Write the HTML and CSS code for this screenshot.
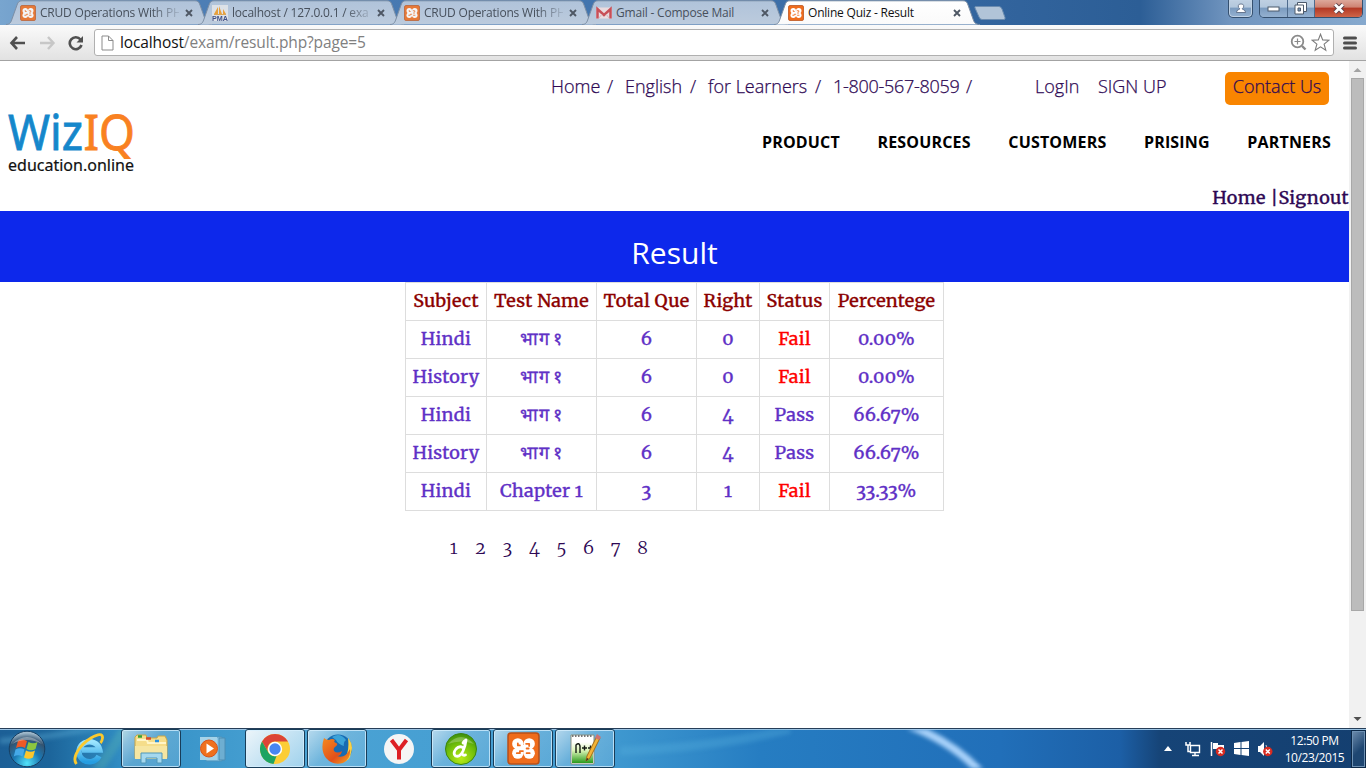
FILE: index.html
```html
<!DOCTYPE html>
<html lang="en">
<head>
<meta charset="utf-8">
<title>Online Quiz - Result</title>
<link rel="stylesheet" href="styles.css">
</head>
<body>
<svg width="0" height="0" class="defs">
  <defs>
    <linearGradient id="tabFill" x1="0" y1="0" x2="0" y2="1"><stop offset="0" stop-color="#b0c3da"/><stop offset="1" stop-color="#bccbdd"/></linearGradient>
    <linearGradient id="tabOn" x1="0" y1="0" x2="0" y2="1"><stop offset="0" stop-color="#fff"/><stop offset="1" stop-color="#fafafa"/></linearGradient>
    <radialGradient id="orb" cx=".5" cy=".9" r=".85"><stop offset="0" stop-color="#52e3fa"/><stop offset=".45" stop-color="#1a78b4"/><stop offset=".8" stop-color="#34536f"/><stop offset="1" stop-color="#9fb9cb"/></radialGradient>
    <linearGradient id="ieBlue" x1="0" y1="0" x2="0" y2="1"><stop offset="0" stop-color="#9de6ff"/><stop offset="1" stop-color="#259de1"/></linearGradient>
    <radialGradient id="dwGreen" cx=".5" cy=".8" r=".8"><stop offset="0" stop-color="#b8ec18"/><stop offset=".6" stop-color="#6fbd0b"/><stop offset="1" stop-color="#3d8f0c"/></radialGradient>
    <linearGradient id="nppFill" x1="0" y1="0" x2="0" y2="1"><stop offset="0" stop-color="#fff"/><stop offset=".4" stop-color="#dcf5b8"/><stop offset="1" stop-color="#2a9a1c"/></linearGradient>
    <linearGradient id="foxFill" x1="0" y1="0" x2="1" y2="1"><stop offset="0" stop-color="#f48a20"/><stop offset=".6" stop-color="#e2501a"/><stop offset="1" stop-color="#f6a623"/></linearGradient>
    <symbol id="tabShape" viewBox="0 0 206 25"><path d="M0 24.5C4 24.5 5 22 6 19L11 5C12 2 13 .8 16 .8H189C192 .8 193 2 194 5L199 19C200 22 201 24.5 206 24.5" stroke="#7d8fa5" stroke-width="1"/></symbol>
    <symbol id="xampp" viewBox="0 0 32 32"><rect x="1" y="1" width="30" height="30" rx="3" fill="#ef6c1c" stroke="#b8501a" stroke-width="1.5"/><g fill="#fff"><circle cx="10.500" cy="11.500" r="5.500"/><circle cx="21.500" cy="11.500" r="5.500"/><circle cx="10.500" cy="20.500" r="5.500"/><circle cx="21.500" cy="20.500" r="5.500"/><rect x="10" y="12.500" width="12" height="7.500"/></g><path d="M10.500 11V13H12.500M18.500 11.500H21.500V13.500M9.500 20.500H12.500V18.500H15.500M19 20.500H22M19 16H21" fill="none" stroke="#ef6c1c" stroke-width="1.700" stroke-linecap="round" stroke-linejoin="round"/></symbol>
    <symbol id="close" viewBox="0 0 8 8"><path d="M1 1L7 7M7 1L1 7" stroke="#4e5764" stroke-width="1.900"/></symbol>
  </defs>
</svg>

<div class="tabs">
  <div class="tab"><svg class="shape"><use href="#tabShape"/></svg><svg class="fav"><use href="#xampp"/></svg><span class="label fade">CRUD Operations With PH</span><svg class="x"><use href="#close"/></svg></div>
  <div class="tab"><svg class="shape"><use href="#tabShape"/></svg>
    <svg class="fav" viewBox="0 0 16 16"><rect width="16" height="16" fill="#e4e6ea"/><path d="M6 2V9H2ZM7 1L10 9H7ZM11 4L14 9H11Z" fill="#f29a1f"/><path d="M2 9.500H14" stroke="#e0a040"/><text x="0" y="15.500" font-size="6.500" font-weight="bold" font-family="Liberation Sans" fill="#2b3d78" textLength="16" lengthAdjust="spacingAndGlyphs">PMA</text></svg>
    <span class="label fade">localhost / 127.0.0.1 / exa</span><svg class="x"><use href="#close"/></svg></div>
  <div class="tab"><svg class="shape"><use href="#tabShape"/></svg><svg class="fav"><use href="#xampp"/></svg><span class="label fade">CRUD Operations With PH</span><svg class="x"><use href="#close"/></svg></div>
  <div class="tab"><svg class="shape"><use href="#tabShape"/></svg>
    <svg class="fav" viewBox="0 0 16 16"><rect y="2.500" width="16" height="11" rx="1" fill="#f3dfe0"/><path d="M1.500 13.500V4L8 10L14.500 4V13.500" fill="none" stroke="#cc3b41" stroke-width="2.500"/><path d="M3 13L6 9M13 13L10 9" stroke="#d7b4b8"/></svg>
    <span class="label">Gmail - Compose Mail</span><svg class="x"><use href="#close"/></svg></div>
  <div class="tab on"><svg class="shape"><use href="#tabShape"/></svg><svg class="fav"><use href="#xampp"/></svg><span class="label">Online Quiz - Result</span><svg class="x"><use href="#close"/></svg></div>
  <svg class="newtab" viewBox="0 0 32 16"><path d="M1.500 1.500H25Q27 1.500 28 4L31 12.500Q31.500 14.500 30 14.500H8Q6 14.500 5 12L1 3Q.5 1.500 1.500 1.500Z" fill="#b1c4d8" stroke="#6b8cb0"/></svg>
  <div class="caps">
    <div class="cap user"><svg width="12" height="12" viewBox="0 0 12 12"><path d="M6 1A2.300 2.300 0 0 1 7.500 5.300C7 6 7.500 6.500 8.500 6.700Q10.500 7.200 10.500 9.500H1.500Q1.500 7.200 3.500 6.700C4.500 6.500 5 6 4.500 5.300A2.300 2.300 0 0 1 6 1Z" fill="#fff" stroke="#50607a" stroke-width=".8"/></svg></div>
    <div class="capgroup">
      <div class="cap min"><svg width="14" height="6" viewBox="0 0 14 6"><rect x="1" y="1" width="11" height="4" fill="#fff" stroke="#4d5a6b"/></svg></div>
      <div class="cap max"><svg width="14" height="13" viewBox="0 0 14 13"><path d="M3.500 .5H12.500V9.500H3.500Z" fill="#fff" stroke="#4d5a6b"/><path d="M1 3H9.500V12H1Z" fill="#fff" stroke="#4d5a6b"/><path d="M4 6H6.500V9H4Z" fill="#7c98b8" stroke="#4d5a6b"/></svg></div>
      <div class="cap quit"><svg width="12" height="11" viewBox="0 0 12 11"><path d="M2 1.500L10 9.500M10 1.500L2 9.500" stroke="#5c4048" stroke-width="4.600"/><path d="M2 1.500L10 9.500M10 1.500L2 9.500" stroke="#fff" stroke-width="2.800"/></svg></div>
    </div>
  </div>
</div>

<div class="toolbar">
  <svg class="tool" width="18" height="16" viewBox="0 0 18 16"><path d="M2.500 8H16M8 2L2.500 8L8 14" fill="none" stroke="#505050" stroke-width="2.600"/></svg>
  <svg class="tool" width="18" height="16" viewBox="0 0 18 16"><path d="M2 8H15.500M10 2L15.500 8L10 14" fill="none" stroke="#c7c7c7" stroke-width="2.400"/></svg>
  <svg class="tool" width="18" height="16" viewBox="0 0 18 16"><path d="M13.500 4.500A6 6 0 1 0 14.500 10" fill="none" stroke="#505050" stroke-width="2.600"/><path d="M16 1V7.500H9.500Z" fill="#505050"/></svg>
  <div class="omni">
    <svg width="13" height="16" viewBox="0 0 13 16"><path d="M1 1H7.500L12 5.500V15H1ZM7.500 1V5.500H12" fill="#fff" stroke="#8b8b8b"/></svg>
    <span class="url"><b>localhost</b>/exam/result.php?page=5</span>
    <svg class="lens" width="17" height="17" viewBox="0 0 17 17"><circle cx="7.500" cy="7.500" r="5.800" fill="none" stroke="#8a8a8a" stroke-width="1.800"/><path d="M12 12L15.500 15.500" stroke="#8a8a8a" stroke-width="2.400"/><path d="M4.500 7.500H10.500M7.500 4.500V10.500" stroke="#8a8a8a" stroke-width="1.200"/></svg>
    <svg width="19" height="19" viewBox="0 0 19 19"><path d="M9.500 1.200L11.700 6.900L17.900 7.200L13.100 11.100L14.800 17.200L9.500 13.800L4.200 17.200L5.900 11.100L1.100 7.200L7.300 6.900Z" fill="#fff" stroke="#7c7c7c" stroke-width="1.100"/></svg>
  </div>
  <svg class="burger" width="14" height="14" viewBox="0 0 14 14"><path d="M1.500 2H12.500M1.500 7H12.500M1.500 12H12.500" stroke="#4e4e4e" stroke-width="3" stroke-linecap="round"/></svg>
</div>

<div class="view">
  <div class="page">
    <div class="top">
      <a class="home">Home</a><i>/</i><a class="eng">English</a><i>/</i><a class="learn">for Learners</a><i>/</i><a class="phone">1-800-567-8059</a><i>/</i>
      <a class="login">LogIn</a><a class="signup">SIGN UP</a><a class="contact">Contact Us</a>
    </div>
    <div class="brand">
      <svg class="logo" width="128" height="64" viewBox="0 0 128 64"><text x="0" y="37.500" font-size="50" textLength="75" lengthAdjust="spacingAndGlyphs" fill="#1587cb" stroke="#1587cb" stroke-width=".8">Wiz</text><text x="75.500" y="37.500" font-size="50" textLength="51.500" lengthAdjust="spacingAndGlyphs" fill="#f98121" stroke="#f98121" stroke-width=".8">IQ</text><text x="0" y="58.500" font-size="16" textLength="126" lengthAdjust="spacingAndGlyphs" fill="#111" stroke="#111" stroke-width=".2">education.online</text></svg>
      <nav><a>PRODUCT</a><a>RESOURCES</a><a>CUSTOMERS</a><a>PRISING</a><a>PARTNERS</a></nav>
    </div>
    <div class="account"><a>Home</a> |<a>Signout</a></div>
    <h1>Result</h1>
    <table>
      <colgroup><col class="c1"><col class="c2"><col class="c3"><col class="c4"><col class="c5"><col class="c6"></colgroup>
      <tr><th>Subject</th><th>Test Name</th><th>Total Que</th><th>Right</th><th>Status</th><th>Percentege</th></tr>
      <tr><td>Hindi</td><td class="hi">भाग १</td><td>6</td><td>0</td><td class="fail">Fail</td><td>0.00%</td></tr>
      <tr><td>History</td><td class="hi">भाग १</td><td>6</td><td>0</td><td class="fail">Fail</td><td>0.00%</td></tr>
      <tr><td>Hindi</td><td class="hi">भाग १</td><td>6</td><td>4</td><td>Pass</td><td>66.67%</td></tr>
      <tr><td>History</td><td class="hi">भाग १</td><td>6</td><td>4</td><td>Pass</td><td>66.67%</td></tr>
      <tr><td>Hindi</td><td>Chapter 1</td><td>3</td><td>1</td><td class="fail">Fail</td><td>33.33%</td></tr>
    </table>
    <div class="pager"><a>1</a><a>2</a><a>3</a><a>4</a><a>5</a><a>6</a><a>7</a><a>8</a></div>
  </div>
  <div class="scroll">
    <svg width="17" height="17" viewBox="0 0 17 17"><path d="M4.500 11L8.500 7L12.500 11Z" fill="#a3a3a3"/></svg>
    <div class="thumb"></div>
    <svg class="down" width="17" height="17" viewBox="0 0 17 17"><path d="M4.500 6L8.500 10L12.500 6Z" fill="#505050"/></svg>
  </div>
</div>

<div class="taskbar">
  <svg class="glow" viewBox="0 0 1366 40" preserveAspectRatio="none"><path d="M895 -8Q950 8 985 48" fill="none" stroke="#a9d2fa" stroke-width="8"/><path d="M620 22Q720 18 790 0" fill="none" stroke="#55aede" stroke-width="9" opacity=".35"/><path d="M0 12Q60 8 110 -5" fill="none" stroke="#6abbe0" stroke-width="6" opacity=".35"/><path d="M95 45L125 0" stroke="#59b4ae" stroke-width="10" opacity=".35"/></svg>
  <div class="apps">
    <div class="app start"><svg width="38" height="38" viewBox="0 0 38 38"><circle cx="19" cy="19" r="17.800" fill="url(#orb)" stroke="#173f63"/><path d="M10 11Q14 8 19 11L17 18Q13 15.500 8 18Z" fill="#ee5926"/><path d="M20.500 12Q25 14.500 29.500 12L27.500 19Q23 21.500 18.500 19Z" fill="#8cc63f"/><path d="M7.500 19.500Q12 17 16.500 19.500L14.500 26.500Q10 24 5.800 26.500Z" fill="#45a9e8"/><path d="M18 20.500Q22.500 23 27 20.500L25 27.500Q20.500 30 16 27.500Z" fill="#fcc62c"/><path d="M4 14Q19 0 34 14Q19 6 4 14Z" fill="#fff" opacity=".35"/></svg></div>
    <div class="app"><svg width="32" height="34" viewBox="0 0 32 34"><path d="M26 24A10.500 10 0 1 1 26.800 18H9" fill="none" stroke="url(#ieBlue)" stroke-width="5.500"/><path d="M3.500 32C-2 25 8 12 18 6C25 2 30 1 29.500 6C29.400 7.500 28.500 10 27.500 11" fill="none" stroke="#fbc92e" stroke-width="2.800"/></svg></div>
    <div class="app open"><svg width="36" height="32" viewBox="0 0 36 32"><path d="M2 4L4 2H13L14 5H24L25 3H32L34 7V25H2Z" fill="#f5dd8a" stroke="#c9a546"/><path d="M4 7H14L15 10H33" fill="none" stroke="#fff5c8" stroke-width="2"/><path d="M5 3.500H9" stroke="#36a035" stroke-width="2.500"/><path d="M13 5.500H18" stroke="#d64a2d" stroke-width="2.500"/><path d="M22 8H26" stroke="#2b91dd" stroke-width="2.500"/><path d="M2 13H34V26H2Z" fill="#f6e6a2"/><path d="M8 20H29V30H24V25H13V30H8Z" fill="#a5d8ee" stroke="#5197b8"/></svg></div>
    <div class="app"><svg width="30" height="28" viewBox="0 0 30 28"><path d="M8 2H24V26H8Z" fill="#8cc7e7" stroke="#4e94bb"/><path d="M21 3H27V25H21Z" fill="#6eaed1" stroke="#4d8eb4"/><path d="M2 2H19V25H2Z" fill="#a4d3e9"/><circle cx="11" cy="13.500" r="8.500" fill="#ef701d" stroke="#d6531b"/><path d="M8.500 8.500L16 13.500L8.500 18.500Z" fill="#fff"/></svg></div>
    <div class="app open current"><svg width="32" height="32" viewBox="0 0 32 32"><circle cx="16" cy="16" r="15" fill="#fccd35"/><path d="M3 8.500A15 15 0 0 1 29 8.500H16A7.500 7.500 0 0 0 9.500 19.800Z" fill="#dc4437"/><path d="M3 8.500L9.500 19.800A7.500 7.500 0 0 0 17.500 23L14.500 31A15 15 0 0 1 3 8.500Z" fill="#1da462"/><circle cx="16" cy="16" r="7.200" fill="#fff"/><circle cx="16" cy="16" r="5.700" fill="#4886f2"/></svg></div>
    <div class="app open"><svg width="32" height="32" viewBox="0 0 32 32"><circle cx="17" cy="15.500" r="14" fill="#176bb2"/><path d="M11 4Q19 -1 25 7Q22 9 23 13Q17 11 15 7Z" fill="#3ba3d8"/><path d="M27 5Q33 12 30 20Q29 28 22 29Q29 20 27 5Z" fill="#fbd143"/><path d="M3 5Q5 7 8 7Q11 5 14 7Q12 9 15 10Q18 11 14 14Q12 15 13 18Q16 21 21 18Q20 23 16 23Q24 26 29 16Q30 26 22 30Q12 33 5 25Q-1 17 3 5Z" fill="url(#foxFill)"/></svg></div>
    <div class="app"><svg width="32" height="32" viewBox="0 0 32 32"><circle cx="16" cy="16" r="15" fill="#f5f5f5"/><path d="M8.500 7L16 17L23.500 7M16 16V26.500" fill="none" stroke="#dd1f25" stroke-width="4"/></svg></div>
    <div class="app open"><svg width="34" height="34" viewBox="0 0 34 34"><circle cx="17" cy="17" r="15.500" fill="url(#dwGreen)" stroke="#3c8611"/><path d="M19 15.500Q15 13.500 12 17Q8.500 21.500 11.500 24Q16 25.500 19 19Q21.500 13 22 8Q20 9 19 11M18 21Q18.500 24 21.500 23" fill="none" stroke="#fff" stroke-width="2.800" stroke-linecap="round" stroke-linejoin="round"/><path d="M4 12Q17 -2 30 12Q17 7 4 12Z" fill="#fff" opacity=".25"/></svg></div>
    <div class="app open"><svg width="33" height="33"><use href="#xampp"/></svg></div>
    <div class="app open"><svg width="32" height="32" viewBox="0 0 32 32"><path d="M2 2H25V31H2Z" fill="#fff" stroke="#88907e"/><path d="M3 9H24V30H3Z" fill="url(#nppFill)"/><path d="M3 3H24" stroke="#777" stroke-width="2" stroke-dasharray="1.500 1.500"/><path d="M7 20V12Q10 9 11 13V20M13 15H18M15.500 12.500V17.500M19 15H24M21.500 12.500V17.500" fill="none" stroke="#151b14" stroke-width="1.400"/><path d="M28 3L31 5L21 25L17 28L18 23Z" fill="#f2b436" stroke="#a56c19"/><path d="M28 1L32 4L30 7L26 5Z" fill="#ce7373"/><path d="M17 28L18 25L19.500 26Z" fill="#222"/></svg></div>
  </div>
  <div class="tray">
    <svg width="8" height="5" viewBox="0 0 8 5"><path d="M0 5L4 0L8 5Z" fill="#fff"/></svg>
    <svg class="net" width="17" height="16" viewBox="0 0 17 16"><path d="M5.500 4.500H14.500V11.500H5.500ZM10 12V14M7 14.500H14" fill="none" stroke="#fff" stroke-width="1.400"/><path d="M1 1V4H5V1M3 4V10.500H5" fill="none" stroke="#fff" stroke-width="1.500"/></svg>
    <svg class="flag" width="16" height="16" viewBox="0 0 16 16"><path d="M1.500 1V15" stroke="#fff" stroke-width="1.500"/><path d="M3 2H8V4H14V10H8V8H3Z" fill="#fff"/><circle cx="10.500" cy="10.500" r="4.700" fill="#d92b20"/><path d="M8.500 8.500L12.500 12.500M12.500 8.500L8.500 12.500" stroke="#fff" stroke-width="1.500"/></svg>
    <svg class="win" width="15" height="15" viewBox="0 0 15 15"><path d="M0 2L6.500 1V7H0ZM7.500 .9L15 0V7H7.500ZM0 8H6.500V14L0 13ZM7.500 8H15V15L7.500 14Z" fill="#fff"/></svg>
    <svg class="vol" width="16" height="16" viewBox="0 0 16 16"><path d="M1 5H3L7 1V15L3 11H1Z" fill="#fff"/><path d="M9 4Q11 8 9 12" fill="none" stroke="#c5d2df"/><circle cx="10.800" cy="10.500" r="4.700" fill="#d92b20"/><path d="M8.800 8.500L12.800 12.500M12.800 8.500L8.800 12.500" stroke="#fff" stroke-width="1.500"/></svg>
    <div class="clock"><span>12:50 PM</span><span>10/23/2015</span></div>
    <div class="peek"></div>
  </div>
</div>
</body>
</html>
```
FILE: styles.css
```css
* { box-sizing: border-box; }
body { margin: 0; width: 1366px; height: 768px; overflow: hidden; background: #fff; font-family: "Open Sans", "Noto Sans", sans-serif; display: flex; flex-direction: column; }
svg { display: block; flex: none; }
.defs { position: absolute; }

.tabs { height: 25px; flex: none; display: flex; padding-left: 6px; background: linear-gradient(90deg, #78a5cf 0, #4d7eb5 200px, #3f72ac 700px, #31639c 1020px, #2c5e96 1140px, #7195bf 1230px, #86a9ce 1366px); }
.tab { position: relative; width: 206px; margin-right: -14px; height: 25px; display: flex; align-items: center; padding: 1px 0 0 14px; flex: none; }
.shape { position: absolute; left: 0; top: 0; width: 206px; height: 25px; fill: url(#tabFill); }
.on { z-index: 2; }
.on .shape { fill: url(#tabOn); }
.fav { position: relative; width: 16px; height: 16px; opacity: .85; }
.on .fav { opacity: 1; }
.label { position: relative; margin-left: 4px; width: 139px; font-size: 12px; line-height: 20px; color: #47505c; white-space: nowrap; letter-spacing: -.2px; }
.on .label { color: #111; }
.fade { -webkit-mask-image: linear-gradient(90deg, #000 112px, rgba(0,0,0,.15) 139px); mask-image: linear-gradient(90deg, #000 112px, rgba(0,0,0,.15) 139px); }
.x { position: relative; width: 8px; height: 8px; margin-left: 6px; }
.newtab { width: 32px; height: 16px; margin: 5px 0 0 8px; }
.caps { margin-left: auto; display: flex; gap: 6px; padding-right: 3px; }
.cap { height: 18px; display: flex; align-items: center; justify-content: center; background: linear-gradient(#bfd0e2 0, #b4c8dd 40%, #7c9cc0 50%, #94b1d0 100%); }
.user { width: 25px; border: 1px solid #35506f; border-top: 0; border-radius: 0 0 5px 5px; box-shadow: inset 0 0 0 1px #bfd1e4; }
.capgroup { display: flex; height: 18px; border: 1px solid #35506f; border-top: 0; border-radius: 0 0 5px 5px; overflow: hidden; }
.capgroup .cap { height: 17px; }
.min { width: 28px; border-right: 1px solid #4e6b8d; }
.max { width: 27px; border-right: 1px solid #4e6b8d; }
.quit { width: 47px; background: linear-gradient(#dda89b 0, #cf8474 40%, #b43a26 50%, #cf6549 100%); }

.toolbar { height: 36px; flex: none; display: flex; align-items: center; background: linear-gradient(#fafafa, #e2e2e2); border-bottom: 1px solid #a3a3a3; padding-left: 9px; }
.tool { margin-right: 11px; }
.omni { display: flex; align-items: center; width: 1240px; height: 27px; margin-left: -2px; background: #fff; border: 1px solid #b0b0b0; border-radius: 3px; padding: 0 3px 0 6px; }
.url { font-size: 15.500px; letter-spacing: -.12px; color: #808080; margin: -1px auto 0 6px; line-height: 20px; }
.url b { font-weight: 400; color: #111; }
.lens { margin-right: 4px; }
.burger { margin-left: 9px; }

.view { height: 667px; flex: none; display: flex; }
.page { width: 1349px; background: #fff; }
.scroll { width: 17px; background: #f1f1f1; display: flex; flex-direction: column; align-items: center; }
.thumb { width: 13px; height: 533px; background: #bcbcbc; border: 1px solid #a8a8a8; }
.down { margin-top: auto; }

.top { display: flex; align-items: center; height: 50px; padding-left: 551px; font-size: 18px; font-weight: 300; color: #2e0854; white-space: nowrap; -webkit-text-stroke: .25px currentColor; }
.top i { font-style: normal; width: 8px; margin: 0 10px 0 7px; }
.top a { flex: none; }
.home { width: 49px; }
.eng { width: 58px; }
.learn { width: 100px; }
.phone { width: 126px; letter-spacing: -.28px; }
.login { width: 45px; margin-left: 51px; }
.signup { width: 69px; margin-left: 18px; }
.contact { width: 104px; height: 33px; margin: 5px 0 0 58px; line-height: 29px; text-align: center; background: #f98500; border-radius: 5px; }
.brand { display: flex; height: 66px; justify-content: space-between; padding: 1px 18px 0 8px; }
.logo { font-family: "Noto Sans", sans-serif; overflow: visible; }
nav { display: flex; gap: 37.500px; padding-top: 19px; font-weight: 700; font-size: 16px; line-height: 22px; letter-spacing: .18px; color: #000; }
.account { height: 34px; padding-top: 9px; text-align: right; line-height: 24px; white-space: nowrap; color: #2e0854; }
.account, table, .pager { font-family: Merriweather, "DejaVu Serif Condensed", serif; font-size: 18px; font-variant-numeric: oldstyle-nums; }
.account, table { -webkit-text-stroke: .35px currentColor; letter-spacing: .3px; }
.account { letter-spacing: .4px; }
h1 { margin: 0; height: 71px; padding-top: 22px; line-height: 40px; text-align: center; background: #0d28eb; color: #fff; font-size: 30px; font-weight: 400; }
table { width: 539px; table-layout: fixed; border-collapse: collapse; margin-left: 405px; color: #6030c6; }
.c1 { width: 81px; } .c2 { width: 110px; } .c3 { width: 100px; } .c4 { width: 63px; } .c5 { width: 70px; } .c6 { width: 114px; }
th, td { height: 38px; padding: 0 0 2px; border: 1px solid #ddd; text-align: center; font-weight: 400; line-height: 24px; white-space: nowrap; }
th { color: #8b0000; }
.fail { color: #f00; }
.pager { display: flex; padding: 25px 0 0 440px; color: #2e0854; line-height: 24px; font-weight: 300; }
.pager a { width: 27px; text-align: center; }

.taskbar { position: relative; height: 40px; flex: none; display: flex; justify-content: space-between; overflow: hidden; border-top: 1px solid #263e58; box-shadow: inset 0 1px #9cc4e4; background: linear-gradient(90deg, #1c5f96 0, #1c659b 50px, #328fc5 125px, #4ba3d4 300px, #419bd1 600px, #267dc2 760px, #216fb9 1000px, #1c5fa6 1120px, #164477 1160px, #143f70 1366px); }
.glow { position: absolute; left: 0; top: 0; width: 1366px; height: 40px; filter: blur(2px); }
.apps { position: relative; display: flex; }
.app { width: 60px; height: 39px; margin-right: 2px; display: flex; align-items: center; justify-content: center; flex: none; }
.start { width: 57px; padding-right: 3px; }
.open { border: 1px solid #183d59; border-radius: 3px; box-shadow: inset 0 0 0 1px rgba(215,240,255,.75); background: linear-gradient(135deg, rgba(255,255,255,.6), rgba(255,255,255,.2) 45%, rgba(255,255,255,.12)); }
.current { background: linear-gradient(135deg, rgba(255,255,255,.9), rgba(205,235,250,.65)); }
.tray { position: relative; display: flex; align-items: center; color: #fff; }
.net { margin-left: 13px; }
.flag, .win, .vol { margin-left: 8px; }
.clock { width: 71px; margin-left: 6px; display: flex; flex-direction: column; align-items: center; font-size: 12px; line-height: 17px; letter-spacing: -.4px; }
.peek { width: 15px; height: 38px; margin-left: 1px; border: 1px solid #0c2847; box-shadow: inset 0 0 0 1px #6e91b3; background: linear-gradient(135deg, #6f8dad, #1e4671 55%); }
```
